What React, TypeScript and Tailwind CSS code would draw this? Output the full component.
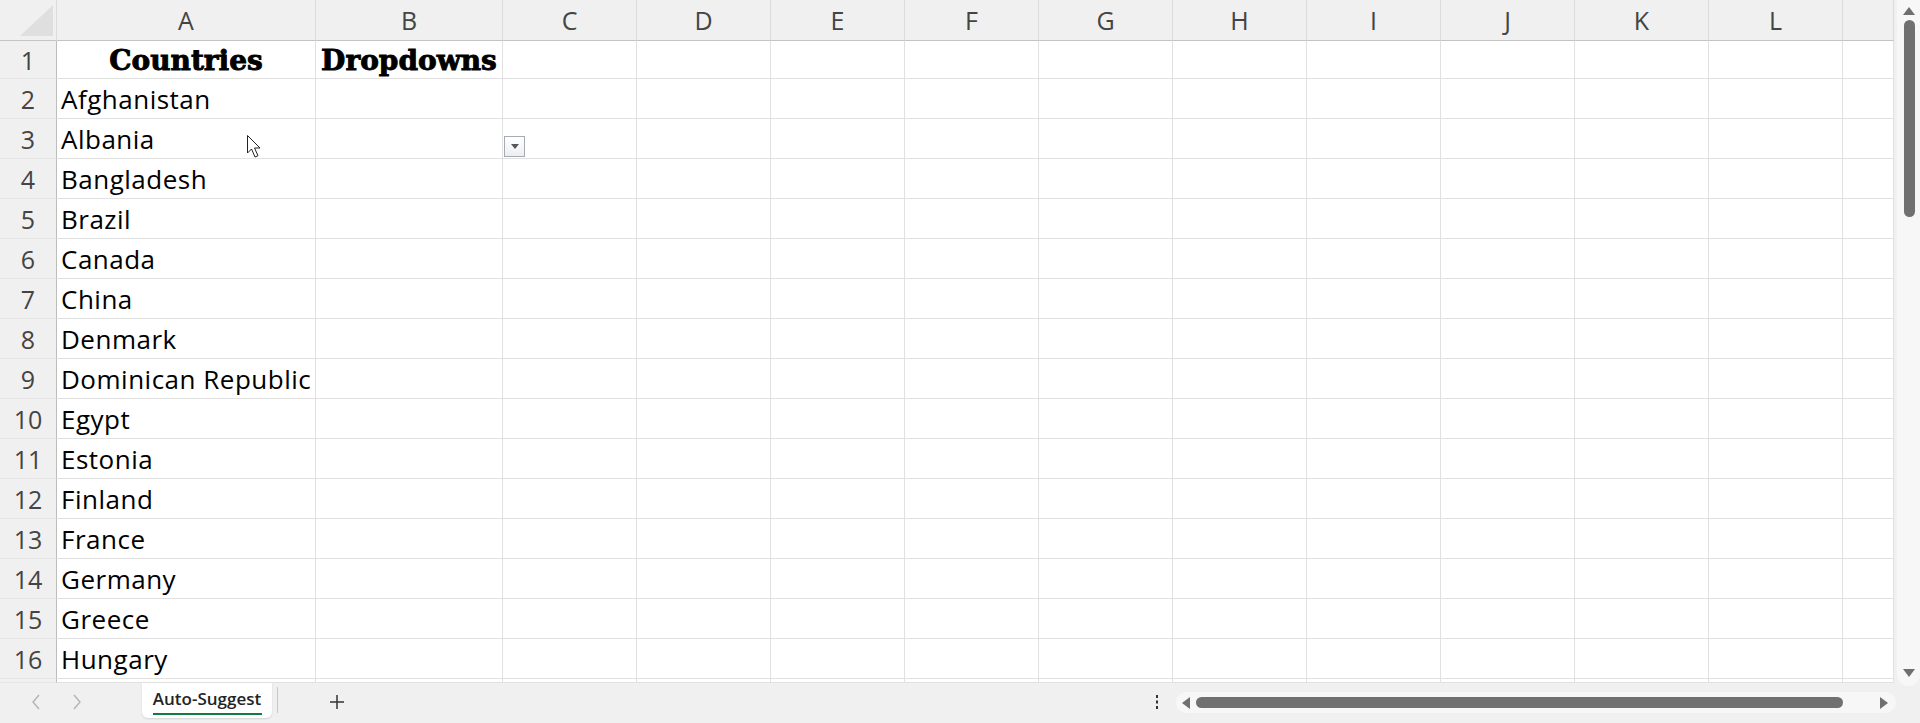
import React from "react";

const countries = [
  "Afghanistan",
  "Albania",
  "Bangladesh",
  "Brazil",
  "Canada",
  "China",
  "Denmark",
  "Dominican Republic",
  "Egypt",
  "Estonia",
  "Finland",
  "France",
  "Germany",
  "Greece",
  "Hungary",
];

// M is only partly on screen, its letter sits past the edge
const letters = ["A", "B", "C", "D", "E", "F", "G", "H", "I", "J", "K", "L", ""];

const Cell = ({ children, className = "" }: { children?: React.ReactNode; className?: string }) => (
  <div className={`border-r border-b border-[#e1e1e1] flex items-center overflow-visible whitespace-nowrap ${className}`}>
    {children}
  </div>
);

const Sheet = () => {
  const rows: React.ReactNode[] = [];

  // header row
  rows.push(
    <div key="corner" className="bg-[#f0f0f0] border-r border-b border-r-[#dcdcdc] border-b-[#c4c4c4] flex items-end justify-end pr-[3px] pb-[4px]">
      <svg width="33" height="31" viewBox="0 0 33 31">
        <polygon points="33,0 33,31 0,31" fill="#dfdfdf" />
      </svg>
    </div>
  );
  letters.forEach((l, i) => {
    rows.push(
      <div
        key={"h" + i}
        className="bg-[#f0f0f0] border-r border-b border-r-[#dcdcdc] border-b-[#c4c4c4] flex items-center justify-center text-[25px] text-[#444] pt-[2px]"
      >
        {l}
      </div>
    );
  });

  // rows 1..17 (17 only peeks in at the bottom)
  for (let r = 1; r <= 17; r++) {
    rows.push(
      <div
        key={"r" + r}
        className="bg-[#f0f0f0] border-r border-b border-r-[#bdbdbd] border-b-[#e6e6e6] flex items-center justify-center text-[25px] text-[#444] pt-[2px]"
      >
        {r < 17 ? r : null}
      </div>
    );
    letters.forEach((l, i) => {
      let content: React.ReactNode = null;
      let cls = "";
      if (r === 1 && i === 0) {
        content = "Countries";
        cls = "justify-center pt-[2px] font-['DejaVu_Serif',serif] font-bold text-[28px] text-black [-webkit-text-stroke:0.9px_black]";
      } else if (r === 1 && i === 1) {
        content = "Dropdowns";
        cls = "justify-center pt-[2px] font-['DejaVu_Serif',serif] font-bold text-[28px] text-black [-webkit-text-stroke:0.9px_black]";
      } else if (i === 0 && r >= 2 && r <= 16) {
        content = countries[r - 2];
        cls = "pl-[4px] pt-[2px] text-[26px] tracking-[0.5px] text-black";
      }
      rows.push(
        <Cell key={"c" + i + "-" + r} className={cls}>
          {content}
        </Cell>
      );
    });
  }

  return (
    <div className="w-[1894px] h-[683px] bg-white grid grid-cols-[57px_259px_187px_repeat(10,134px)_1fr] grid-rows-[41px_38px_repeat(15,40px)_1fr] overflow-hidden font-['Open_Sans',sans-serif]">
      {rows}
    </div>
  );
};

const VScroll = () => (
  <div className="w-[26px] h-[683px] bg-[#f0f0f0] flex justify-end">
    <div className="w-[23px] h-[686px] bg-[#f7f7f7] rounded-b-[12px] flex flex-col items-center pt-[7px]">
      <svg width="12" height="8" viewBox="0 0 12 8">
        <polygon points="6,0 12,8 0,8" fill="#6f6f6f" />
      </svg>
      <div className="w-[11px] h-[197px] mt-[5px] ml-[1px] bg-[#707070] rounded-full" />
      <div className="flex-1" />
      <svg width="12" height="8" viewBox="0 0 12 8" className="mb-[9px]">
        <polygon points="0,0 12,0 6,8" fill="#6f6f6f" />
      </svg>
    </div>
  </div>
);

const BottomBar = () => (
  <div className="h-[40px] bg-[#f0f0f0] flex items-start font-['Open_Sans',sans-serif]">
    <div className="w-[142px] h-[38px] flex items-center">
      <svg width="10" height="16" viewBox="0 0 10 16" className="ml-[31px]">
        <path d="M8 1 L2 8 L8 15" stroke="#b4b4b4" strokeWidth="1.4" fill="none" />
      </svg>
      <svg width="10" height="16" viewBox="0 0 10 16" className="ml-[31px]">
        <path d="M2 1 L8 8 L2 15" stroke="#b4b4b4" strokeWidth="1.4" fill="none" />
      </svg>
    </div>
    <div className="w-[130px] h-[35px] bg-white rounded-b-[6px] shadow-[0_1px_2px_rgba(0,0,0,0.12)] flex flex-col items-center pt-[4px]">
      <span className="text-[17px] font-semibold text-[#242424] leading-[24px]">Auto-Suggest</span>
      <div className="w-[109px] h-[2px] bg-[#107c41] mt-[2px]" />
    </div>
    <div className="w-[1px] h-[26px] bg-[#c8c8c8] ml-[5px] mt-[4px]" />
    <div className="ml-[51px] h-[38px] flex items-center">
      <svg width="16" height="16" viewBox="0 0 16 16">
        <path d="M8 1 V15 M1 8 H15" stroke="#333" strokeWidth="1.5" />
      </svg>
    </div>
    <div className="flex-1" />
    <div className="h-[38px] flex items-center mr-[17px]">
      <svg width="4" height="16" viewBox="0 0 4 16">
        <rect x="1" y="1" width="2" height="3" fill="#333" />
        <rect x="1" y="6.5" width="2" height="3" fill="#333" />
        <rect x="1" y="12" width="2" height="3" fill="#333" />
      </svg>
    </div>
    <div className="w-[720px] h-[21px] mt-[9px] mr-[24px] bg-[#f7f7f7] rounded-full flex items-center px-[6px]">
      <svg width="8" height="12" viewBox="0 0 8 12">
        <polygon points="8,0 8,12 0,6" fill="#6f6f6f" />
      </svg>
      <div className="w-[647px] h-[11px] ml-[6px] bg-[#707070] rounded-full" />
      <div className="flex-1" />
      <svg width="8" height="12" viewBox="0 0 8 12" className="mr-[2px]">
        <polygon points="0,0 8,6 0,12" fill="#6f6f6f" />
      </svg>
    </div>
  </div>
);

export default function App() {
  return (
    <div className="relative w-[1920px] h-[723px] overflow-hidden bg-[#f0f0f0]">
      <div className="flex">
        <Sheet />
        <VScroll />
      </div>
      <BottomBar />

      {/* data validation dropdown on B3 */}
      <div className="absolute left-[504px] top-[136px] w-[21px] h-[21px] border border-[#a6abb3] bg-gradient-to-b from-white to-[#eceef2] flex items-center justify-center">
        <svg width="8" height="5" viewBox="0 0 8 5">
          <polygon points="0,0 8,0 4,5" fill="#555" />
        </svg>
      </div>

      {/* mouse pointer */}
      <svg className="absolute left-[246px] top-[134px]" width="17" height="26" viewBox="0 0 17 26">
        <path
          d="M1.5 1.5 L1.5 19 L5.5 15 L9 23 L12 21.7 L8.5 14 L14 14 Z"
          fill="white"
          stroke="#222"
          strokeWidth="1"
          strokeLinejoin="round"
        />
      </svg>
    </div>
  );
}
